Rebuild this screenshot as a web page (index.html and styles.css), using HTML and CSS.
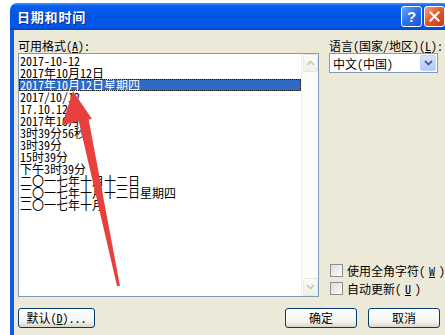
FILE: index.html
```html
<!DOCTYPE html>
<html lang="zh-CN">
<head>
    <meta charset="UTF-8">
    <title>日期和时间</title>
    <link rel="stylesheet" href="styles.css">
</head>
<body>
    <div class="window">
        <div class="titlebar">
            <span class="title">日期和时间</span>
            <div class="caption-buttons">
                <span class="cap-btn cap-help">?</span>
                <span class="cap-btn cap-close">
                    <svg width="11" height="11" viewBox="0 0 11 11"><path d="M1.5 1.5 L9.5 9.5 M9.5 1.5 L1.5 9.5" stroke="#fff" stroke-width="2.2" stroke-linecap="square"/></svg>
                </span>
            </div>
        </div>
        <div class="body">
            <div class="main">
                <div class="col-left">
                    <div class="label">可用格式(<u>A</u>):</div>
                    <div class="listbox">
                        <ul class="items">
                            <li>2017-10-12</li>
                            <li>2017年10月12日</li>
                            <li class="selected">2017年10月12日星期四</li>
                            <li>2017/10/12</li>
                            <li>17.10.12</li>
                            <li>2017年10月</li>
                            <li>3时39分56秒</li>
                            <li>3时39分</li>
                            <li>15时39分</li>
                            <li>下午3时39分</li>
                            <li>二〇一七年十月十二日</li>
                            <li>二〇一七年十月十二日星期四</li>
                            <li>二〇一七年十月</li>
                        </ul>
                        <div class="scrollbar">
                            <div class="sb-btn">
                                <svg width="9" height="6" viewBox="0 0 9 6"><path d="M1 5 L4.5 1.5 L8 5" fill="none" stroke="#c9c7ba" stroke-width="1.6"/></svg>
                            </div>
                            <div class="sb-track"></div>
                            <div class="sb-btn">
                                <svg width="9" height="6" viewBox="0 0 9 6"><path d="M1 1 L4.5 4.5 L8 1" fill="none" stroke="#c9c7ba" stroke-width="1.6"/></svg>
                            </div>
                        </div>
                    </div>
                </div>
                <div class="col-right">
                    <div class="label">语言(国家/地区)(<u>L</u>):</div>
                    <div class="combo">
                        <span class="combo-text">中文(中国)</span>
                        <span class="combo-btn">
                            <svg width="9" height="6" viewBox="0 0 9 6"><path d="M1 1 L4.5 4.5 L8 1" fill="none" stroke="#4d6185" stroke-width="1.8"/></svg>
                        </span>
                    </div>
                    <div class="checks">
                        <div class="check"><span class="box"></span>使用全角字符(<u>W</u>)</div>
                        <div class="check"><span class="box"></span>自动更新(<u>U</u>)</div>
                    </div>
                </div>
            </div>
            <div class="footer">
                <button class="btn btn-default">默认(<u>D</u>)...</button>
                <div class="footer-right">
                    <button class="btn">确定</button>
                    <button class="btn">取消</button>
                </div>
            </div>
        </div>
    </div>

    <svg class="arrow" width="445" height="335" viewBox="0 0 445 335">
        <polygon points="78,118 88,116 120,286 117,286" fill="#e8403e"/>
        <polygon points="73,91 62,125 92,119" fill="#e8403e"/>
    </svg>
</body>
</html>
```

FILE: styles.css
```css
body {
    margin: 0;
    width: 445px;
    height: 335px;
    overflow: hidden;
    position: relative;
    background: #fff;
    font-family: "Noto Sans CJK SC", sans-serif;
    font-size: 12px;
    font-feature-settings: "hwid" 1;
    color: #000;
}

.window {
    margin: 3px 0 0 10px;
    width: 440px;
    height: 332px;
}

.titlebar {
    height: 27px;
    display: flex;
    align-items: center;
    padding: 0 5px 0 7px;
    border-radius: 7px 7px 0 0;
    background: linear-gradient(to bottom, #3d8fff 0%, #0a5eef 12%, #0054e3 50%, #0058eb 85%, #0046d2 100%);
}

.title {
    color: #fff;
    font-weight: bold;
    font-size: 13px;
    letter-spacing: 0.8px;
    text-shadow: 1px 1px 0 #0a2a8a;
}

.caption-buttons {
    margin-left: auto;
    display: flex;
    gap: 2px;
}

.cap-btn {
    width: 19px;
    height: 19px;
    border: 1px solid #fff;
    border-radius: 3px;
    display: flex;
    align-items: center;
    justify-content: center;
    color: #fff;
    font-family: "Liberation Sans", sans-serif;
    font-weight: bold;
    font-size: 15px;
}

.cap-help {
    background: linear-gradient(135deg, #6aa6ff 0%, #2b6fe8 50%, #1d55d6 100%);
}

.cap-close {
    background: linear-gradient(135deg, #f2a088 0%, #e0562f 50%, #c93a12 100%);
}

.body {
    height: 305px;
    box-sizing: border-box;
    background: #ece9d8;
    border-left: 4px solid #1659e0;
    padding: 8px 10px 0 4px;
}

.main {
    display: flex;
    gap: 10px;
}

.label {
    height: 15px;
    line-height: 15px;
    white-space: nowrap;
}

.col-left {
    width: 301px;
}

.listbox {
    height: 244px;
    box-sizing: border-box;
    border: 1px solid #7f9db9;
    background: #fff;
    display: flex;
}

.items {
    flex: 1;
    list-style: none;
    margin: 0;
    padding: 1px 0 0 0;
}

.items li {
    height: 12px;
    line-height: 12px;
    padding-left: 1px;
    white-space: nowrap;
}

.items li.selected {
    background: #316ac5;
    color: #fff;
    outline: 1px dotted #1a1a1a;
    outline-offset: -1px;
}

.scrollbar {
    width: 17px;
    display: flex;
    flex-direction: column;
    background: #fcfcfa;
    border-left: 1px solid #efeee8;
    box-sizing: border-box;
}

.sb-btn {
    height: 16px;
    margin: 0 0 0 1px;
    border: 1px solid #e9e8e0;
    border-radius: 2px;
    background: linear-gradient(to bottom, #fbfbf9, #f0efe8);
    display: flex;
    align-items: center;
    justify-content: center;
}

.sb-track {
    flex: 1;
}

.col-right {
    width: 109px;
    display: flex;
    flex-direction: column;
}

.combo {
    height: 20px;
    box-sizing: border-box;
    border: 1px solid #7f9db9;
    background: #fff;
    display: flex;
    align-items: center;
}

.combo-text {
    flex: 1;
    padding-left: 3px;
}

.combo-btn {
    width: 16px;
    height: 16px;
    margin-right: 1px;
    border-radius: 2px;
    background: linear-gradient(to bottom, #d5e2fd, #b4c9f6);
    border: 1px solid #c3d3fd;
    box-sizing: border-box;
    display: flex;
    align-items: center;
    justify-content: center;
}

.checks {
    margin-top: auto;
    display: flex;
    flex-direction: column;
    gap: 1px;
}

.check {
    height: 17px;
    display: flex;
    align-items: center;
    gap: 4px;
    padding-left: 1px;
    white-space: nowrap;
}

.box {
    flex-shrink: 0;
    width: 13px;
    height: 13px;
    box-sizing: border-box;
    border: 1px solid #8e8f8f;
    background: linear-gradient(135deg, #dcdcd7, #fdfdfd);
}

.footer {
    margin-top: 11px;
    display: flex;
    justify-content: space-between;
}

.footer-right {
    display: flex;
    gap: 11px;
}

.btn {
    width: 72px;
    height: 20px;
    padding: 0;
    border: 1px solid #003c74;
    border-radius: 3px;
    background: linear-gradient(to bottom, #ffffff 0%, #f4f4f0 70%, #d8d4c8 100%);
    font-family: "Noto Sans CJK SC", sans-serif;
    font-size: 12px;
    font-feature-settings: "hwid" 1;
    color: #000;
    line-height: 18px;
}

.btn-default {
    width: 77px;
}

.arrow {
    position: absolute;
    top: 0;
    left: 0;
    pointer-events: none;
}
```
